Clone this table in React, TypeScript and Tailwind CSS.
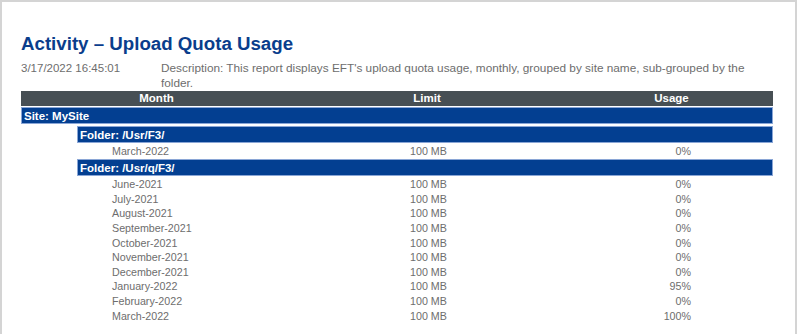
const rows1 = [{ month: "March-2022", limit: "100 MB", usage: "0%" }]

const rows2 = [
  { month: "June-2021", limit: "100 MB", usage: "0%" },
  { month: "July-2021", limit: "100 MB", usage: "0%" },
  { month: "August-2021", limit: "100 MB", usage: "0%" },
  { month: "September-2021", limit: "100 MB", usage: "0%" },
  { month: "October-2021", limit: "100 MB", usage: "0%" },
  { month: "November-2021", limit: "100 MB", usage: "0%" },
  { month: "December-2021", limit: "100 MB", usage: "0%" },
  { month: "January-2022", limit: "100 MB", usage: "95%" },
  { month: "February-2022", limit: "100 MB", usage: "0%" },
  { month: "March-2022", limit: "100 MB", usage: "100%" },
]

type Row = { month: string; limit: string; usage: string }

function DataRow({ row, tall }: { row: Row; tall?: boolean }) {
  return (
    <div className={`flex items-center text-[10.7px] text-[#6d6d6d] ${tall ? "h-[16px]" : "h-[14.6px]"}`}>
      <div className="w-[271px] pl-[91px]">{row.month}</div>
      <div className="w-[270px] pl-[118px]">{row.limit}</div>
      <div className="flex-1 pr-[82px] text-right">{row.usage}</div>
    </div>
  )
}

function GroupBar({ label, indent }: { label: string; indent?: boolean }) {
  return (
    <div
      className={`h-[17px] border border-[#8aa6d6] bg-[#033f91] pl-[2px] pt-[1px] text-[11.5px] font-bold leading-[15px] text-white ${
        indent ? "ml-[56px]" : ""
      }`}
    >
      {label}
    </div>
  )
}

export default function App() {
  return (
    <div className="h-[340px] w-[797px] overflow-hidden border-2 border-[#d4d4d4] bg-white font-['Liberation_Sans',Arial,sans-serif]">
      <div className="w-[771px] pl-[19px] pt-[31px]">
        <h1 className="text-[18.7px] font-bold leading-[22px] text-[#0a3d8c]">Activity – Upload Quota Usage</h1>
        <div className="mt-[6px] flex text-[11.5px] leading-[14.5px] text-[#6d6d6d]">
          <div className="w-[140px] shrink-0">3/17/2022 16:45:01</div>
          <div className="w-[600px] text-[11.8px]">
            Description: This report displays EFT's upload quota usage, monthly, grouped by site name, sub-grouped by
            the folder.
          </div>
        </div>

        <div className="mt-[1px] flex h-[15px] items-center bg-[#474f54] pt-[1px] text-[11.5px] font-bold text-white">
          <div className="w-[271px] text-center">Month</div>
          <div className="w-[270px] text-center">Limit</div>
          <div className="flex-1 pl-[8px] text-center">Usage</div>
        </div>

        <div className="mt-[1px]">
          <GroupBar label="Site: MySite" />
        </div>
        <div className="mt-[2px]">
          <GroupBar label="Folder: /Usr/F3/" indent />
        </div>
        {rows1.map((r, i) => (
          <DataRow key={i} row={r} tall />
        ))}
        <GroupBar label="Folder: /Usr/q/F3/" indent />
        <div className="pt-[1px]">
          {rows2.map((r, i) => (
            <DataRow key={i} row={r} />
          ))}
        </div>
      </div>
    </div>
  )
}
